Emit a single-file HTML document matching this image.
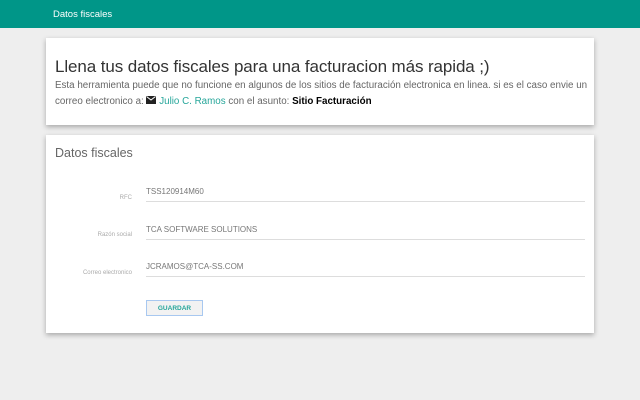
<!DOCTYPE html>
<html><head><meta charset="utf-8"><style>
body{margin:0;width:640px;height:400px;background:#eeeeee;font-family:"Liberation Sans",sans-serif;position:relative;overflow:hidden}
.hdr{position:absolute;left:0;top:0;width:640px;height:28px;background:#009688;color:#fff;font-size:9.5px}
.hdr span{position:absolute;left:53px;top:9px}
.card{position:absolute;left:46px;width:548px;background:#fff;box-shadow:0 2px 5px rgba(0,0,0,.3)}
h1{position:absolute;left:9px;top:19px;margin:0;font-weight:normal;font-size:17px;color:#333;white-space:nowrap;letter-spacing:-0.1px}
.p{position:absolute;left:9px;top:40px;font-size:9.8px;color:#666;line-height:16px;width:536px}
.p a{color:#26a69a}
.p b{color:#000}
h2{position:absolute;left:9px;top:11px;margin:0;font-weight:normal;font-size:12.5px;color:#666}
.lbl{position:absolute;right:462px;font-size:6px;color:#aaa;text-align:right;white-space:nowrap}
.inp{position:absolute;left:100px;width:439px;border-bottom:1px solid #ddd;font-size:8px;color:#777;height:14px}
.btn{position:absolute;left:100px;top:165px;width:57px;height:16px;border:1px solid #a8c8f0;background:#f2f2f2;color:#26a69a;font-size:6.5px;font-weight:bold;text-align:center;line-height:16px;box-sizing:border-box}
</style></head><body>
<div class="hdr"><span>Datos fiscales</span></div>
<div class="card" style="top:38px;height:87px">
<h1>Llena tus datos fiscales para una facturacion más rapida ;)</h1>
<div class="p">Esta herramienta puede que no funcione en algunos de los sitios de facturación electronica en linea. si es el caso envie un correo electronico a: <svg width="10" height="8" viewBox="0 0 10 8" style="vertical-align:0"><rect width="10" height="8" fill="#222"/><path d="M0.5 0.5L5 4L9.5 0.5" stroke="#fff" fill="none"/></svg> <a>Julio C. Ramos</a> con el asunto: <b>Sitio Facturación</b></div>
</div>
<div class="card" style="top:135px;height:198px">
<h2>Datos fiscales</h2>
<div class="lbl" style="top:60px">RFC</div>
<div class="inp" style="top:52px">TSS120914M60</div>
<div class="lbl" style="top:97px">Razón social</div>
<div class="inp" style="top:90px">TCA SOFTWARE SOLUTIONS</div>
<div class="lbl" style="top:135px">Correo electronico</div>
<div class="inp" style="top:127px">JCRAMOS@TCA-SS.COM</div>
<div class="btn">GUARDAR</div>
</div>
</body></html>
